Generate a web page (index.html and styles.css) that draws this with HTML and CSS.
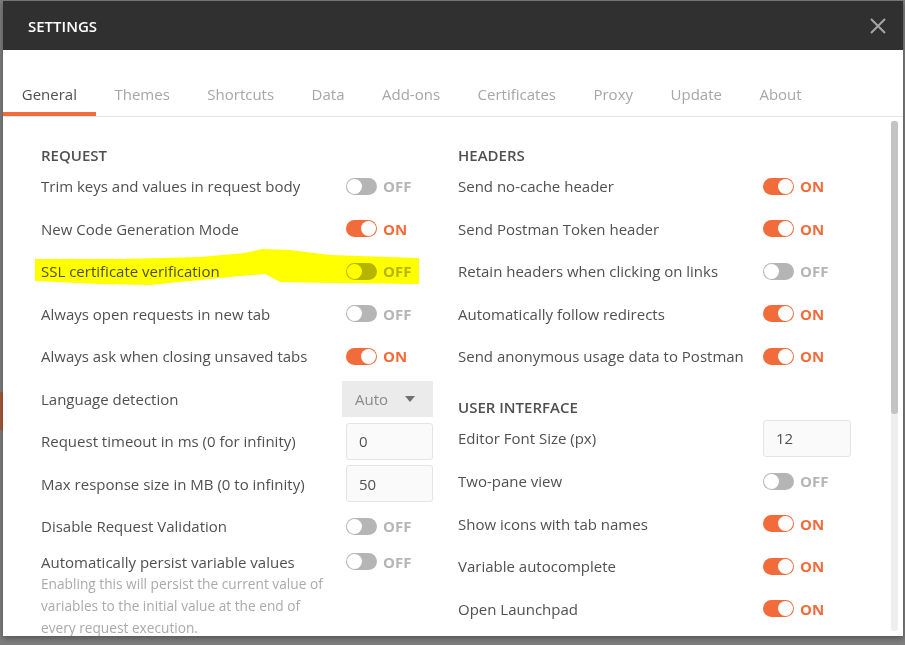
FILE: index.html
```html
<!DOCTYPE html>
<html>
<head>
<meta charset="utf-8">
<link rel="stylesheet" href="styles.css">
</head>
<body>
<div class="backdrop-bit"></div>
<div class="modal">
  <div class="modal-header">
    <span class="title">SETTINGS</span>
    <svg class="close" width="18" height="18" viewBox="0 0 18 18"><path d="M2 2 L16 16 M16 2 L2 16" stroke="#a6a6a6" stroke-width="2" fill="none"/></svg>
  </div>
  <div class="tabs">
    <div class="tab active">General</div>
    <div class="tab">Themes</div>
    <div class="tab">Shortcuts</div>
    <div class="tab">Data</div>
    <div class="tab">Add-ons</div>
    <div class="tab">Certificates</div>
    <div class="tab">Proxy</div>
    <div class="tab">Update</div>
    <div class="tab">About</div>
  </div>
  <div class="content">
    <div class="col">
      <div class="section-title">REQUEST</div>
      <div class="row"><span class="label">Trim keys and values in request body</span><span class="toggle off"><i></i><b>OFF</b></span></div>
      <div class="row"><span class="label">New Code Generation Mode</span><span class="toggle on"><i></i><b>ON</b></span></div>
      <div class="row"><span class="label">SSL certificate verification</span><span class="toggle off"><i></i><b>OFF</b></span></div>
      <div class="row"><span class="label">Always open requests in new tab</span><span class="toggle off"><i></i><b>OFF</b></span></div>
      <div class="row"><span class="label">Always ask when closing unsaved tabs</span><span class="toggle on"><i></i><b>ON</b></span></div>
      <div class="row"><span class="label">Language detection</span><span class="select">Auto<svg width="10" height="6" viewBox="0 0 10 6"><path d="M0 0 H10 L5 6 Z" fill="#707070"/></svg></span></div>
      <div class="row"><span class="label">Request timeout in ms (0 for infinity)</span><span class="input">0</span></div>
      <div class="row"><span class="label">Max response size in MB (0 to infinity)</span><span class="input">50</span></div>
      <div class="row"><span class="label">Disable Request Validation</span><span class="toggle off"><i></i><b>OFF</b></span></div>
      <div class="row top">
        <div class="label">Automatically persist variable values
          <div class="desc">Enabling this will persist the current value of variables to the initial value at the end of every request execution.</div>
        </div>
        <span class="toggle off"><i></i><b>OFF</b></span>
      </div>
    </div>
    <div class="col">
      <div class="section-title">HEADERS</div>
      <div class="row"><span class="label">Send no-cache header</span><span class="toggle on"><i></i><b>ON</b></span></div>
      <div class="row"><span class="label">Send Postman Token header</span><span class="toggle on"><i></i><b>ON</b></span></div>
      <div class="row"><span class="label">Retain headers when clicking on links</span><span class="toggle off"><i></i><b>OFF</b></span></div>
      <div class="row"><span class="label">Automatically follow redirects</span><span class="toggle on"><i></i><b>ON</b></span></div>
      <div class="row"><span class="label">Send anonymous usage data to Postman</span><span class="toggle on"><i></i><b>ON</b></span></div>
      <div class="section-title second">USER INTERFACE</div>
      <div class="row tall"><span class="label">Editor Font Size (px)</span><span class="input wide">12</span></div>
      <div class="row"><span class="label">Two-pane view</span><span class="toggle off"><i></i><b>OFF</b></span></div>
      <div class="row"><span class="label">Show icons with tab names</span><span class="toggle on"><i></i><b>ON</b></span></div>
      <div class="row"><span class="label">Variable autocomplete</span><span class="toggle on"><i></i><b>ON</b></span></div>
      <div class="row"><span class="label">Open Launchpad</span><span class="toggle on"><i></i><b>ON</b></span></div>
    </div>
    <div class="scrollbar"><div class="thumb"></div></div>
  </div>
  <svg class="highlight" width="905" height="645" viewBox="0 0 905 645"><path d="M35 259 L120 259 L200 257 L245 253 L262 249 L290 250 L330 255 L419 258 L419 284 L330 283 L280 282 L265 274 L240 276 L150 285 L100 284 L35 281 Z" fill="#ffff00"/></svg>
</div>
</body>
</html>
```
FILE: styles.css
```css
html, body {
  margin: 0;
  padding: 0;
}
body {
  width: 905px;
  height: 645px;
  background: #7d7d7d;
  font-family: "Open Sans", "Noto Sans", sans-serif;
  overflow: hidden;
  position: relative;
}
.backdrop-bit {
  position: absolute;
  left: 0;
  top: 392px;
  width: 3px;
  height: 38px;
  background: #a65a3e;
}
.modal {
  position: absolute;
  left: 3px;
  top: 1px;
  width: 900px;
  height: 635px;
  background: #fff;
  overflow: hidden;
  box-shadow: 0 2px 6px rgba(0,0,0,0.35);
  display: flex;
  flex-direction: column;
}
.modal-header {
  height: 49px;
  flex: none;
  background: #303030;
  display: flex;
  align-items: center;
  justify-content: space-between;
  padding: 0 16px 0 25px;
}
.title {
  color: #fff;
  font-size: 15px;
  font-weight: 600;
}
.close {
  display: block;
}
.tabs {
  flex: none;
  display: flex;
  align-items: flex-end;
  height: 66px;
  border-bottom: 1px solid #e4e4e4;
}
.tab {
  font-size: 15px;
  line-height: 20px;
  color: #a6a6a6;
  padding: 0 18.75px 8px;
  border-bottom: 4px solid transparent;
}
.tab.active {
  color: #505050;
  border-bottom-color: #f26b3a;
}
.content {
  flex: 1;
  position: relative;
  display: flex;
  gap: 24px;
  padding: 28px 0 0 38px;
  overflow: hidden;
}
.col {
  width: 393px;
  display: flex;
  flex-direction: column;
}
.section-title {
  font-size: 15px;
  font-weight: 600;
  color: #505050;
  line-height: 20px;
  height: 20px;
}
.section-title.second {
  margin-top: 19px;
}
.row {
  display: flex;
  align-items: center;
  height: 42.5px;
  flex: none;
}
.row.tall {
  height: 43.5px;
}
.row.top {
  align-items: flex-start;
  height: auto;
  padding-top: 4px;
}
.label {
  width: 305px;
  flex: none;
  font-size: 15px;
  line-height: 20px;
  color: #505050;
}
.desc {
  font-size: 13.7px;
  line-height: 22px;
  color: #aaaaaa;
  margin-top: 1px;
  max-width: 290px;
}
.toggle {
  display: flex;
  align-items: center;
  height: 20px;
}
.toggle i {
  display: block;
  width: 31px;
  height: 17px;
  border-radius: 9px;
  box-sizing: border-box;
  position: relative;
}
.toggle i::after {
  content: "";
  position: absolute;
  top: 1px;
  width: 15px;
  height: 15px;
  border-radius: 50%;
  background: #fff;
}
.toggle b {
  font-size: 15px;
  font-weight: 700;
  margin-left: 6px;
}
.toggle.off i {
  background: #b5b5b5;
}
.toggle.off i::after {
  left: 1px;
}
.toggle.off b {
  color: #b5b5b5;
}
.toggle.on i {
  background: #f26b3a;
}
.toggle.on i::after {
  right: 1px;
}
.toggle.on b {
  color: #f26b3a;
}
.select {
  margin-left: -4px;
  width: 91px;
  height: 36px;
  box-sizing: border-box;
  background: #ebebeb;
  display: flex;
  align-items: center;
  justify-content: space-between;
  padding: 0 18px 0 13px;
  font-size: 15px;
  color: #8a8a8a;
}
.input {
  width: 87px;
  height: 37px;
  box-sizing: border-box;
  border: 1px solid #e4e4e4;
  border-radius: 3px;
  background: #fafafa;
  display: flex;
  align-items: center;
  padding-left: 12px;
  font-size: 15px;
  color: #505050;
}
.input.wide {
  width: 88px;
}
.scrollbar {
  position: absolute;
  right: 5px;
  top: 4px;
  bottom: 5px;
  width: 7px;
  background: #eeeeee;
  border-radius: 3px;
}
.thumb {
  height: 293px;
  background: #c3c3c3;
  border-radius: 3px;
}
.highlight {
  position: absolute;
  left: -3px;
  top: -1px;
  mix-blend-mode: multiply;
  pointer-events: none;
}
```
